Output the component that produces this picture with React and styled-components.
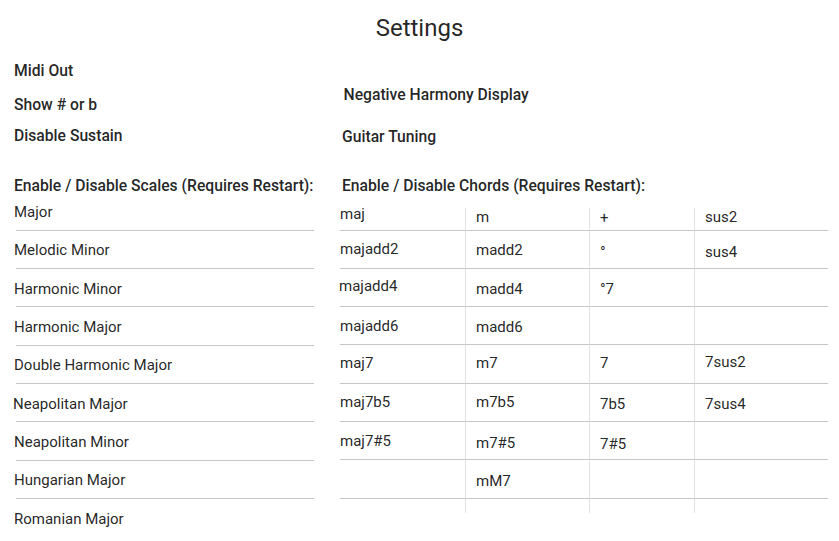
import React from "react";
import styled, { createGlobalStyle } from "styled-components";

const GlobalStyle = createGlobalStyle`
  html, body {
    margin: 0;
    padding: 0;
    background: #ffffff;
  }
  body {
    font-family: Roboto, "Noto Sans", "Liberation Sans", sans-serif;
    color: rgba(0, 0, 0, 0.87);
  }
`;

const Page = styled.div`
  width: 839px;
  box-sizing: border-box;
  padding: 0 0 0 14px;
`;

const Title = styled.h1`
  margin: 14px 0 0 -14px;
  font-size: 24px;
  line-height: 28px;
  font-weight: 400;
  text-align: center;
`;

const TopGrid = styled.div`
  display: grid;
  grid-template-columns: 328px 1fr;
`;

const OptionColumn = styled.div`
  display: flex;
  flex-direction: column;
  padding-top: ${(p) => p.$top}px;
`;

const OptionLabel = styled.div`
  font-size: 15.7px;
  font-weight: 500;
  line-height: 18px;
  height: ${(p) => p.$h}px;
  margin-left: ${(p) => p.$indent || 0}px;
`;

const LowerGrid = styled.div`
  display: grid;
  grid-template-columns: 328px 1fr;
  margin-top: 32px;
`;

const Section = styled.div`
  display: flex;
  flex-direction: column;
`;

const SectionHeading = styled.div`
  font-size: 15.7px;
  font-weight: 500;
  line-height: 16px;
  height: 16px;
  white-space: nowrap;
`;

const ScaleList = styled.div`
  display: flex;
  flex-direction: column;
  margin: -1px 0 0 2px;
  width: 298px;
`;

const ScaleRow = styled.div`
  box-sizing: border-box;
  height: 38.3px;
  padding-top: 2px;
  display: flex;
  align-items: center;
  border-bottom: ${(p) => (p.$last ? "none" : "1px solid #c6c6c6")};
`;

const ScaleName = styled.span`
  font-size: 15px;
  line-height: 18px;
  margin-left: ${(p) => -2 + (p.$dx || 0)}px;
`;

const ChordGrid = styled.div`
  display: grid;
  grid-template-columns: 125px 124px 105px 134px;
  grid-template-rows: 23px repeat(7, 38.3px) 14px;
  margin: 14px 0 0 -2px;
  width: 488px;
`;

const ChordCell = styled.div`
  box-sizing: border-box;
  display: flex;
  align-items: center;
  padding-left: ${(p) => (p.$first ? 0 : 10)}px;
  border-left: ${(p) => (p.$first ? "none" : "1px solid #e2e2e2")};
  border-bottom: ${(p) => (p.$last ? "none" : "1px solid #c6c6c6")};
`;

const ChordName = styled.span`
  font-size: 15px;
  line-height: 18px;
  white-space: nowrap;
  transform: translate(${(p) => p.$dx || 0}px, ${(p) => p.$dy || 0}px);
`;

const scales = [
  ["Major", 0],
  ["Melodic Minor", 0],
  ["Harmonic Minor", 0],
  ["Harmonic Major", 0],
  ["Double Harmonic Major", 0],
  ["Neapolitan Major", -1],
  ["Neapolitan Minor", 0],
  ["Hungarian Major", 0],
  ["Romanian Major", 0],
];

// [text, dy, dx]
const chords = [
  [["maj", -5], ["m", -2], ["+", -1], ["sus2", -2]],
  [["majadd2", 0], ["madd2", 1], ["°", 3], ["sus4", 3]],
  [["majadd4", -1, -1], ["madd4", 2], ["°7", 2], [""]],
  [["majadd6", 0], ["madd6", 1], [""], [""]],
  [["maj7", -1], ["m7", -1], ["7", -1], ["7sus2", -2]],
  [["maj7b5", 0], ["m7b5", 0], ["7b5", 2], ["7sus4", 2]],
  [["maj7#5", 0], ["m7#5", 1.5], ["7#5", 2.5], [""]],
  [[""], ["mM7", 2], [""], [""]],
  [[""], [""], [""], [""]],
];

export default function App() {
  return (
    <>
      <GlobalStyle />
      <Page>
        <Title>Settings</Title>
        <TopGrid>
          <OptionColumn $top={20}>
            <OptionLabel $h={34}>Midi Out</OptionLabel>
            <OptionLabel $h={31}>Show # or b</OptionLabel>
            <OptionLabel $h={18}>Disable Sustain</OptionLabel>
          </OptionColumn>
          <OptionColumn $top={43.5}>
            <OptionLabel $h={42} $indent={1.5}>
              Negative Harmony Display
            </OptionLabel>
            <OptionLabel $h={18}>Guitar Tuning</OptionLabel>
          </OptionColumn>
        </TopGrid>
        <LowerGrid>
          <Section>
            <SectionHeading>Enable / Disable Scales (Requires Restart):</SectionHeading>
            <ScaleList>
              {scales.map(([name, dx], i) => (
                <ScaleRow key={name} $last={i === scales.length - 1}>
                  <ScaleName $dx={dx}>{name}</ScaleName>
                </ScaleRow>
              ))}
            </ScaleList>
          </Section>
          <Section>
            <SectionHeading>Enable / Disable Chords (Requires Restart):</SectionHeading>
            <ChordGrid>
              {chords.map((row, r) =>
                row.map(([text, dy, dx], c) => (
                  <ChordCell
                    key={`${r}-${c}`}
                    $first={c === 0}
                    $last={r === chords.length - 1}
                  >
                    {text && (
                      <ChordName $dy={dy} $dx={dx}>
                        {text}
                      </ChordName>
                    )}
                  </ChordCell>
                ))
              )}
            </ChordGrid>
          </Section>
        </LowerGrid>
      </Page>
    </>
  );
}
